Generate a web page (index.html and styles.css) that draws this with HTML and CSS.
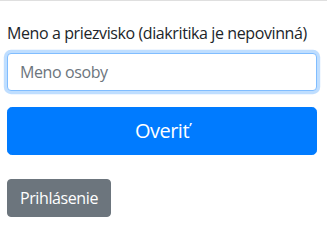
FILE: index.html
```html
<!DOCTYPE html>
<html lang="sk">
<head>
<meta charset="utf-8">
<title>Overenie</title>
<link rel="stylesheet" href="styles.css">
</head>
<body>
<div class="topline"></div>
<main class="page">
  <form class="form">
    <div class="group">
      <label class="label" for="meno">Meno a priezvisko (diakritika je nepovinná)</label>
      <input class="input" id="meno" type="text" placeholder="Meno osoby">
    </div>
    <button class="btn btn-primary" type="button">Overiť</button>
  </form>
  <div class="footer">
    <button class="btn btn-secondary" type="button">Prihlásenie</button>
  </div>
</main>
</body>
</html>
```
FILE: styles.css
```css
* { box-sizing: border-box; }
html, body { margin: 0; padding: 0; background: #fff; }
body {
  font-family: "Open Sans", "Noto Sans", "Liberation Sans", sans-serif;
  font-size: 16px;
  line-height: 1.5;
  color: #212529;
  letter-spacing: -0.4px;
}
.topline { height: 1px; background: #dfdfdf; }
.page { padding: 20px 10px 0 7px; }
.form { display: flex; flex-direction: column; }
.group { display: flex; flex-direction: column; margin-bottom: 16px; }
.label { display: block; margin-bottom: 8px; white-space: nowrap; }
.input {
  display: block;
  width: 100%;
  height: 38px;
  padding: 6px 12px;
  font: inherit;
  letter-spacing: -0.4px;
  color: #495057;
  background: #fff;
  border: 1px solid #80bdff;
  border-radius: 4px;
  outline: 0;
  box-shadow: 0 0 0 3.2px rgba(0, 123, 255, .25);
}
.input::placeholder { color: #6c757d; opacity: 1; }
.btn {
  display: inline-block;
  font: inherit;
  letter-spacing: -0.4px;
  border: 1px solid transparent;
  color: #fff;
  cursor: pointer;
  text-align: center;
}
.btn-primary {
  width: 100%;
  height: 48px;
  padding: 8px 16px;
  font-size: 20px;
  letter-spacing: -0.5px;
  line-height: 1.5;
  border-radius: 4.8px;
  background: #007bff;
  border-color: #007bff;
}
.footer { margin-top: 24px; }
.btn-secondary {
  height: 38px;
  padding: 6px 12px;
  border-radius: 4px;
  background: #6c757d;
  border-color: #6c757d;
}
```
